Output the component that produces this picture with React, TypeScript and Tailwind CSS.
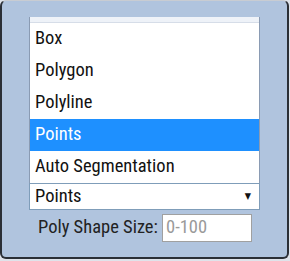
import React from "react";

const font = { fontFamily: '"Roboto Condensed", "Liberation Sans Narrow", "DejaVu Sans Condensed", Roboto, sans-serif' };

export default function App() {
  const items = ["Box", "Polygon", "Polyline", "Points", "Auto Segmentation"];
  return (
    <div className="w-[290px] h-[261px] bg-[#dfe3ea]" style={font}>
      <div className="w-[289px] h-[259px] bg-[#b0c4de] border-x-2 border-b-2 border-t border-x-[#2a2f36] border-b-[#2a2f36] border-t-[#c8ccd2] rounded-md pl-[27px] pt-[16px]">
        <div className="w-[231px] border-x border-[#8a9bb3] bg-white">
          <div className="h-[6px] bg-[#eef2f8] border-b border-[#d6dde8]" />
          {items.map((it) => (
            <div
              key={it}
              className={
                "h-[32px] flex items-center pl-[5px] text-[18.5px] " +
                (it === "Points" ? "bg-[#1e90ff] text-white" : "text-[#111]")
              }
            >
              {it}
            </div>
          ))}
        </div>
        <div className="w-[231px] h-[27px] border border-[#7f9db9] bg-white flex items-center justify-between pl-[5px] pr-[8px] text-[18.5px] text-[#111]">
          <span>Points</span>
          <span className="text-[9px] text-[#111]">▼</span>
        </div>
        <div className="flex items-center mt-[4px] pl-[9px]">
          <span className="text-[18.5px] text-[#222] w-[124px]">Poly Shape Size:</span>
          <div className="w-[90px] h-[28px] border border-[#a0a0a0] bg-white flex items-center pl-[3px] text-[18.5px] text-[#9a9a9a]">
            0-100
          </div>
        </div>
      </div>
    </div>
  );
}
